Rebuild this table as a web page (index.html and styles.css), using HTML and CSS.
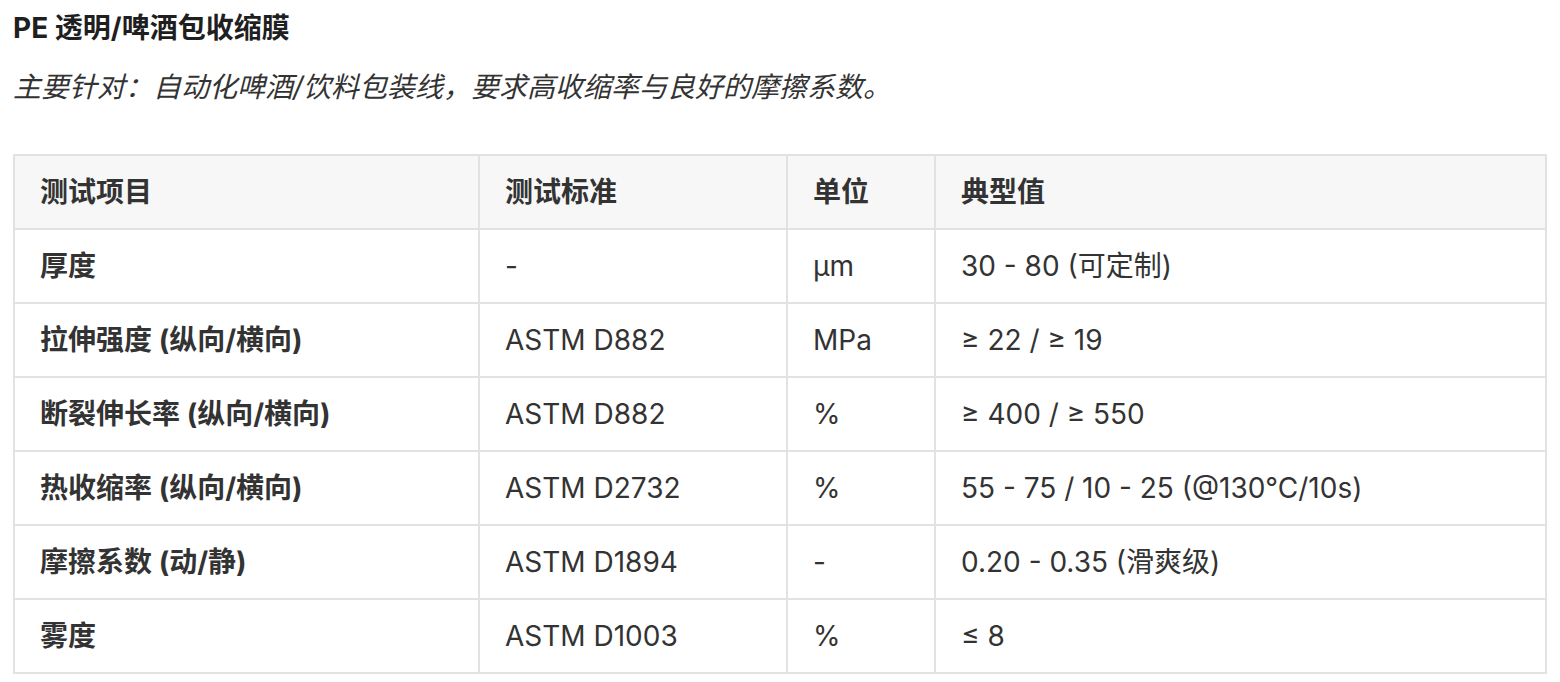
FILE: index.html
```html
<!DOCTYPE html>
<html lang="zh-CN">
<head>
<meta charset="utf-8">
<title>PE 透明/啤酒包收缩膜</title>
<link rel="stylesheet" href="styles.css">
</head>
<body>
<main class="page">
  <h3 class="title">PE 透明/啤酒包收缩膜</h3>
  <p class="lead">主要针对：自动化啤酒/饮料包装线，要求高收缩率与良好的摩擦系数。</p>
  <table class="spec">
    <colgroup>
      <col class="c1"><col class="c2"><col class="c3"><col class="c4">
    </colgroup>
    <thead>
      <tr><th>测试项目</th><th>测试标准</th><th>单位</th><th>典型值</th></tr>
    </thead>
    <tbody>
      <tr><td class="item">厚度</td><td>-</td><td>µm</td><td>30 - 80 (可定制)</td></tr>
      <tr><td class="item">拉伸强度 (纵向/横向)</td><td>ASTM D882</td><td>MPa</td><td>≥ 22 / ≥ 19</td></tr>
      <tr><td class="item">断裂伸长率 (纵向/横向)</td><td>ASTM D882</td><td>%</td><td>≥ 400 / ≥ 550</td></tr>
      <tr><td class="item">热收缩率 (纵向/横向)</td><td>ASTM D2732</td><td>%</td><td>55 - 75 / 10 - 25 (@130°C/10s)</td></tr>
      <tr><td class="item">摩擦系数 (动/静)</td><td>ASTM D1894</td><td>-</td><td>0.20 - 0.35 (滑爽级)</td></tr>
      <tr><td class="item">雾度</td><td>ASTM D1003</td><td>%</td><td>≤ 8</td></tr>
    </tbody>
  </table>
</main>
</body>
</html>
```

FILE: styles.css
```css
html, body {
  margin: 0;
  background: #ffffff;
}
body {
  font-family: "Inter", "Noto Sans CJK SC", sans-serif;
  font-size: 28px;
  color: #333333;
}
.page {
  padding: 8px 13px 0 13px;
}
.title {
  margin: 0;
  font-size: 28px;
  line-height: 40px;
  font-weight: 700;
  color: #1f1f1f;
}
.lead {
  margin: 19px 0 47px 0;
  line-height: 40px;
  font-style: italic;
  color: #333333;
}
.spec {
  width: 100%;
  border-collapse: collapse;
  table-layout: fixed;
}
.spec .c1 { width: 465px; }
.spec .c2 { width: 308px; }
.spec .c3 { width: 148px; }
.spec .c4 { width: auto; }
.spec th,
.spec td {
  border: 2px solid #e2e2e2;
  height: 74px;
  padding: 0 25px;
  text-align: left;
  line-height: 36px;
  box-sizing: border-box;
}
.spec th {
  background: #f7f7f7;
  font-weight: 700;
  color: #333333;
}
.spec td {
  font-weight: 400;
  color: #333333;
}
.spec td.item {
  font-weight: 700;
}
```
